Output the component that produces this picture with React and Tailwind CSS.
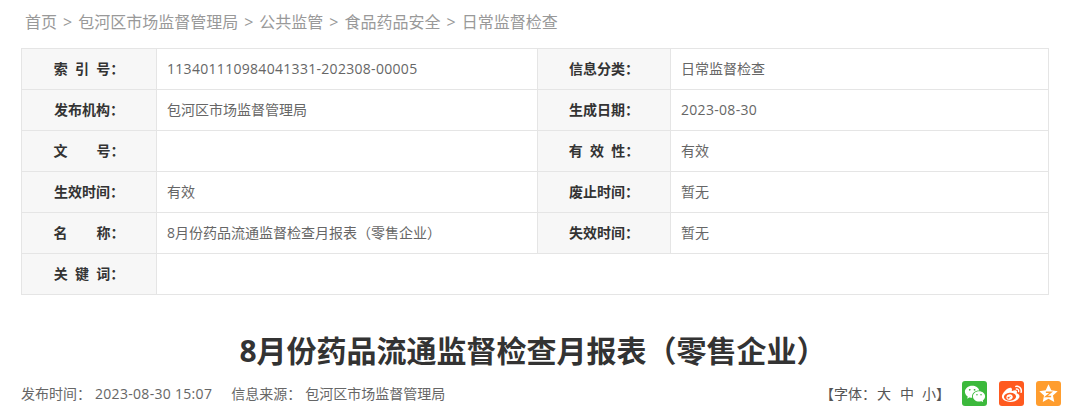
import React from "react";
import { RiWechatFill, RiWeiboFill } from "react-icons/ri";

const font = "font-['Open_Sans','Noto_Sans_CJK_SC',sans-serif]";
const Th = ({ children }) => (
  <td className="w-[135px] h-[41px] border border-[#e5e5e5] bg-[#f7f7f7] p-0 pb-[2px] text-center text-[14px] font-bold text-[#333] whitespace-pre">{children}</td>
);
const Td = ({ children, colSpan, num }) => (
  <td colSpan={colSpan} className={`h-[41px] border border-[#e5e5e5] pl-[10px] pb-[2px] text-[14px] text-[#666] ${num ? "tracking-[0.3px]" : ""}`}>{children}</td>
);

export default function App() {
  return (
    <div className={`${font} w-[1066px] h-[411px] overflow-hidden bg-white`}>
      <div className="pl-[25px] pt-[11px] h-[48px] text-[16px] leading-[22px] text-[#999] flex gap-[6px]">
        <span>首页</span><span>&gt;</span><span>包河区市场监督管理局</span><span>&gt;</span><span>公共监管</span><span>&gt;</span><span>食品药品安全</span><span>&gt;</span><span>日常监督检查</span>
      </div>
      <table className="ml-[21px] w-[1028px] table-fixed border-collapse">
        <colgroup>
          <col className="w-[135px]" /><col className="w-[381px]" /><col className="w-[133px]" /><col />
        </colgroup>
        <tbody>
          <tr><Th>索  引  号：</Th><Td num>113401110984041331-202308-00005</Td><Th>信息分类：</Th><Td>日常监督检查</Td></tr>
          <tr><Th>发布机构：</Th><Td>包河区市场监督管理局</Td><Th>生成日期：</Th><Td num>2023-08-30</Td></tr>
          <tr><Th>文        号：</Th><Td></Td><Th>有  效  性：</Th><Td>有效</Td></tr>
          <tr><Th>生效时间：</Th><Td>有效</Td><Th>废止时间：</Th><Td>暂无</Td></tr>
          <tr><Th>名        称：</Th><Td>8月份药品流通监督检查月报表（零售企业）</Td><Th>失效时间：</Th><Td>暂无</Td></tr>
          <tr><Th>关  键  词：</Th><Td colSpan={3}></Td></tr>
        </tbody>
      </table>
      <h1 className="mt-[34px] text-center text-[30px] leading-[44px] font-bold text-[#333]">8月份药品流通监督检查月报表（零售企业）</h1>
      <div className="mt-[8px] pl-[21px] pr-[5px] flex items-center justify-between text-[14px] text-[#666]">
        <div className="flex">
          <span>发布时间：</span><span className="ml-[4px] tracking-[0.3px]">2023-08-30 15:07</span>
          <span className="ml-[19px]">信息来源：</span><span className="ml-[4px]">包河区市场监督管理局</span>
        </div>
        <div className="flex items-center">
          <span className="mr-[12px] text-[#555] flex">
            <span>【字体：</span>
            <span className="ml-[1px]">大</span>
            <span className="ml-[9px]">中</span>
            <span className="ml-[8px]">小</span>
            <span>】</span>
          </span>
          <div className="flex gap-[12px]">
            <span className="w-[25px] h-[25px] rounded-[3px] bg-[#3cb93c] flex items-center justify-center"><RiWechatFill className="text-white text-[22px]" /></span>
            <span className="w-[25px] h-[25px] rounded-[3px] bg-[#ff5a1f] flex items-center justify-center"><RiWeiboFill className="text-white text-[22px]" /></span>
            <span className="w-[25px] h-[25px] rounded-[3px] bg-[#ff9d2e] flex items-center justify-center">
              <svg viewBox="0 0 24 24" className="w-[21px] h-[21px]">
                <path fill="#fff" d="M12 1.5l3.2 6.9 7.3.9-5.4 5 1.5 7.4L12 18.1l-6.6 3.6 1.5-7.4-5.4-5 7.3-.9z" />
                <path fill="none" stroke="#ff9d2e" strokeWidth="1.6" d="M9 10.5h6l-6 5h6" />
              </svg>
            </span>
          </div>
        </div>
      </div>
    </div>
  );
}
